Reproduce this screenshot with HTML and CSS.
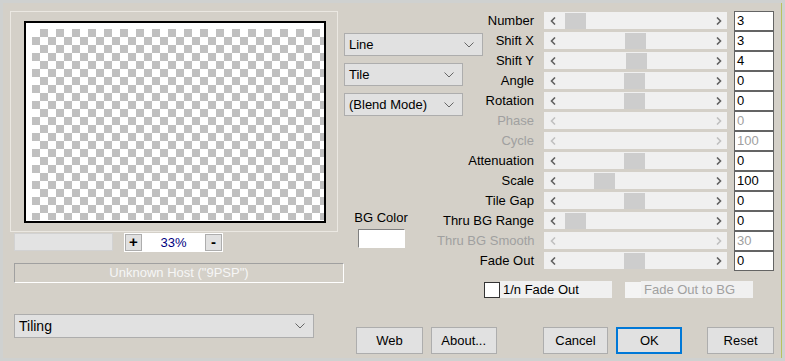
FILE: index.html
```html
<!DOCTYPE html>
<html lang="en">
<head>
  <meta charset="UTF-8" />
  <title>Tiling</title>
  <link rel="stylesheet" href="styles.css">
</head>
<body>
  <div class="window">
    <div class="left">
      <div class="preview-group">
        <div class="preview-frame"><div class="checker"></div></div>
      </div>
      <div class="zoom-row">
        <div class="status-box"></div>
        <div class="zoom-box">
          <span class="zoom-btn">+</span>
          <span class="zoom-value">33%</span>
          <span class="zoom-btn">-</span>
        </div>
      </div>
      <div class="host-box">Unknown Host ("9PSP")</div>
      <div class="dropdown dropdown-tiling">
        <span>Tiling</span>
        <svg width="10" height="6" viewBox="0 0 10 6"><polyline points="0.5,0.5 5,5 9.5,0.5" fill="none" stroke="#666" stroke-width="1"/></svg>
      </div>
    </div>

    <div class="right">
      <div class="upper">
        <div class="side">
          <div class="dropdown dropdown-line">
            <span>Line</span>
            <svg width="10" height="6" viewBox="0 0 10 6"><polyline points="0.5,0.5 5,5 9.5,0.5" fill="none" stroke="#666" stroke-width="1"/></svg>
          </div>
          <div class="dropdown dropdown-short">
            <span>Tile</span>
            <svg width="10" height="6" viewBox="0 0 10 6"><polyline points="0.5,0.5 5,5 9.5,0.5" fill="none" stroke="#666" stroke-width="1"/></svg>
          </div>
          <div class="dropdown dropdown-short">
            <span>(Blend Mode)</span>
            <svg width="10" height="6" viewBox="0 0 10 6"><polyline points="0.5,0.5 5,5 9.5,0.5" fill="none" stroke="#666" stroke-width="1"/></svg>
          </div>
          <div class="bg-color">
            <span>BG Color</span>
            <div class="color-box"></div>
          </div>
        </div>

        <div class="params" id="params"></div>
      </div>

      <div class="checks">
        <div class="check">
          <span class="check-box"></span>
          <span class="check-label">1/n Fade Out</span>
        </div>
        <div class="check disabled">
          <span class="check-box"></span>
          <span class="check-label">Fade Out to BG</span>
        </div>
      </div>

      <div class="buttons">
        <button class="btn btn-web">Web</button>
        <button class="btn btn-about">About...</button>
        <button class="btn btn-cancel">Cancel</button>
        <button class="btn btn-ok">OK</button>
        <button class="btn btn-reset">Reset</button>
      </div>
    </div>
  </div>

  <script>
    // thumb = offset of the thumb inside the track, null when the control is disabled
    const params = [
      { label: "Number", value: "3", thumb: 4 },
      { label: "Shift X", value: "3", thumb: 64 },
      { label: "Shift Y", value: "4", thumb: 65 },
      { label: "Angle", value: "0", thumb: 63 },
      { label: "Rotation", value: "0", thumb: 63 },
      { label: "Phase", value: "0", thumb: null },
      { label: "Cycle", value: "100", thumb: null },
      { label: "Attenuation", value: "0", thumb: 63 },
      { label: "Scale", value: "100", thumb: 33 },
      { label: "Tile Gap", value: "0", thumb: 63 },
      { label: "Thru BG Range", value: "0", thumb: 4 },
      { label: "Thru BG Smooth", value: "30", thumb: null },
      { label: "Fade Out", value: "0", thumb: 63 }
    ];

    const left = '<svg width="6" height="8" viewBox="0 0 6 8"><polyline points="5,0.5 1.5,4 5,7.5" fill="none" stroke="currentColor" stroke-width="1.6"/></svg>';
    const right = '<svg width="6" height="8" viewBox="0 0 6 8"><polyline points="1,0.5 4.5,4 1,7.5" fill="none" stroke="currentColor" stroke-width="1.6"/></svg>';

    let html = "";
    params.forEach(p => {
      const off = p.thumb === null ? " disabled" : "";
      const thumb = p.thumb === null ? "" : `<span class="thumb" style="margin-left:${p.thumb}px"></span>`;
      html += `
        <div class="param-label${off}">${p.label}</div>
        <div class="scroll${off}">
          <span class="arrow">${left}</span>
          <span class="track">${thumb}</span>
          <span class="arrow">${right}</span>
        </div>
        <div class="param-value${off}">${p.value}</div>`;
    });
    document.getElementById("params").innerHTML = html;
  </script>
</body>
</html>
```

FILE: styles.css
```css
body {
  margin: 0;
  background-color: #cfd1d0;
  font-family: "Liberation Sans", Arial, sans-serif;
  font-size: 13px;
  color: #000;
}
.window {
  display: flex;
  width: 771px;
  height: 347px;
  margin: 3px 0 0 3px;
  padding: 8px 0 0 7px;
  background-color: #d4d0c8;
  border-right: 1px solid #b8c25e;
}
.left {
  width: 334px;
  flex: none;
}
.preview-group {
  width: 328px;
  height: 221px;
  box-sizing: border-box;
  border: 1px solid #ebe8e2;
  padding: 9px 0 0 13px;
}
.preview-frame {
  width: 302px;
  height: 202px;
  box-sizing: border-box;
  border: 2px solid #000;
  background-color: #fff;
  padding: 6px 0 1px 6px;
}
.checker {
  width: 100%;
  height: 100%;
  background-color: #fff;
  background-image:
    linear-gradient(45deg, #c0c0c0 25%, transparent 25%, transparent 75%, #c0c0c0 75%),
    linear-gradient(45deg, #c0c0c0 25%, transparent 25%, transparent 75%, #c0c0c0 75%);
  background-size: 16px 16px;
  background-position: 0 0, 8px 8px;
}
.zoom-row {
  display: flex;
  align-items: flex-start;
  margin-top: 1px;
}
.status-box {
  width: 99px;
  height: 18px;
  box-sizing: border-box;
  margin-left: 4px;
  background-color: #e3e3e3;
  border: 1px solid #d2d2d2;
}
.zoom-box {
  display: flex;
  align-items: center;
  justify-content: space-between;
  width: 99px;
  height: 19px;
  margin-left: 11px;
  padding: 0 1px;
  box-sizing: border-box;
  background-color: #fff;
}
.zoom-btn {
  width: 17px;
  height: 17px;
  box-sizing: border-box;
  background-color: #e1e1e1;
  border: 1px solid #adadad;
  font-weight: bold;
  font-size: 15px;
  line-height: 14px;
  text-align: center;
}
.zoom-value {
  color: #000080;
}
.host-box {
  width: 330px;
  height: 20px;
  box-sizing: border-box;
  margin: 11px 0 0 4px;
  border: 1px solid;
  border-color: #a0a0a0 #fff #fff #a0a0a0;
  color: #f6f6f6;
  text-align: center;
  line-height: 18px;
}
.dropdown {
  display: flex;
  align-items: center;
  justify-content: space-between;
  height: 23px;
  box-sizing: border-box;
  padding: 0 8px 0 4px;
  background-color: #e1e1e1;
  border: 1px solid #adadad;
}
.dropdown-tiling {
  width: 300px;
  height: 24px;
  margin: 31px 0 0 4px;
  font-size: 14px;
}
.dropdown-line {
  width: 139px;
}
.dropdown-short {
  width: 119px;
  margin-top: 7px;
}
.right {
  width: 430px;
  flex: none;
}
.upper {
  display: flex;
}
.side {
  width: 93px;
  flex: none;
  padding-top: 22px;
}
.bg-color {
  display: flex;
  flex-direction: column;
  align-items: center;
  width: 56px;
  margin: 94px 0 0 9px;
}
.color-box {
  width: 47px;
  height: 19px;
  box-sizing: border-box;
  margin-top: 4px;
  background-color: #fff;
  border: 1px solid;
  border-color: #808080 #fff #fff #808080;
}
.params {
  display: grid;
  grid-template-columns: 107px 190px 40px;
  grid-auto-rows: 20px;
}
.param-label {
  padding-right: 10px;
  text-align: right;
  white-space: nowrap;
  line-height: 20px;
}
.param-label.disabled {
  color: #a0a0a0;
}
.scroll {
  display: flex;
  width: 183px;
  height: 17px;
  margin-top: 1px;
  background-color: #f0f0f0;
  color: #606060;
}
.scroll.disabled {
  color: #c0c0c0;
}
.arrow {
  display: flex;
  align-items: center;
  justify-content: center;
  width: 17px;
  flex: none;
}
.track {
  display: flex;
  flex: 1;
}
.thumb {
  width: 21px;
  height: 16px;
  margin-top: 1px;
  background-color: #cdcdcd;
}
.param-value {
  height: 20px;
  box-sizing: border-box;
  padding-left: 2px;
  background-color: #fff;
  border: 1px solid #646464;
  line-height: 18px;
}
.param-value.disabled {
  color: #a0a0a0;
}
.checks {
  display: flex;
  gap: 13px;
  margin-top: 10px;
  padding-left: 140px;
}
.check {
  display: flex;
  align-items: flex-start;
}
.check-box {
  width: 16px;
  height: 16px;
  box-sizing: border-box;
  margin-top: 1px;
  background-color: #fff;
  border: 1px solid #333;
}
.check-label {
  width: 112px;
  height: 17px;
  padding-left: 3px;
  box-sizing: border-box;
  background-color: #f0f0f0;
  line-height: 17px;
}
.check.disabled .check-box {
  border-color: #f4f4f4;
  background-color: #f4f4f4;
}
.check.disabled .check-label {
  color: #a0a0a0;
}
.buttons {
  display: flex;
  margin-top: 29px;
  padding-left: 12px;
}
.btn {
  width: 66px;
  height: 27px;
  padding: 0;
  font-family: "Liberation Sans", Arial, sans-serif;
  font-size: 13px;
  color: #000;
  background-color: #e1e1e1;
  border: 1px solid #adadad;
}
.btn-web {
  width: 67px;
}
.btn-about {
  margin-left: 8px;
}
.btn-cancel {
  margin-left: 46px;
}
.btn-ok {
  margin-left: 8px;
  border: 2px solid #0078d7;
}
.btn-reset {
  width: 67px;
  margin-left: 25px;
}
```
